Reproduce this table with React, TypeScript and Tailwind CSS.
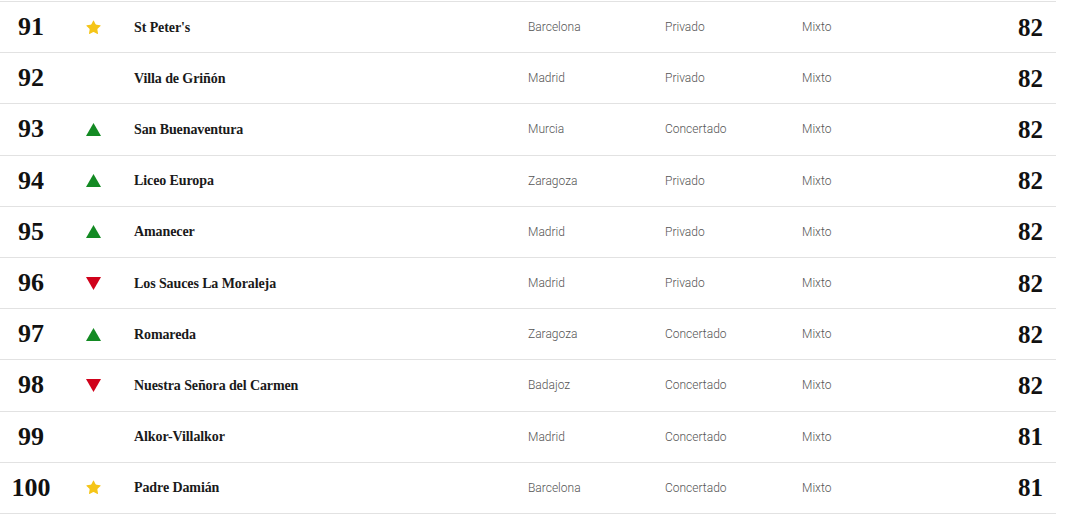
import { Star } from 'lucide-react';

type Trend = 'star' | 'up' | 'down' | null;

const rows: { pos: number; trend: Trend; name: string; city: string; kind: string; sex: string; score: number }[] = [
  { pos: 91, trend: 'star', name: "St Peter's", city: 'Barcelona', kind: 'Privado', sex: 'Mixto', score: 82 },
  { pos: 92, trend: null, name: 'Villa de Griñón', city: 'Madrid', kind: 'Privado', sex: 'Mixto', score: 82 },
  { pos: 93, trend: 'up', name: 'San Buenaventura', city: 'Murcia', kind: 'Concertado', sex: 'Mixto', score: 82 },
  { pos: 94, trend: 'up', name: 'Liceo Europa', city: 'Zaragoza', kind: 'Privado', sex: 'Mixto', score: 82 },
  { pos: 95, trend: 'up', name: 'Amanecer', city: 'Madrid', kind: 'Privado', sex: 'Mixto', score: 82 },
  { pos: 96, trend: 'down', name: 'Los Sauces La Moraleja', city: 'Madrid', kind: 'Privado', sex: 'Mixto', score: 82 },
  { pos: 97, trend: 'up', name: 'Romareda', city: 'Zaragoza', kind: 'Concertado', sex: 'Mixto', score: 82 },
  { pos: 98, trend: 'down', name: 'Nuestra Señora del Carmen', city: 'Badajoz', kind: 'Concertado', sex: 'Mixto', score: 82 },
  { pos: 99, trend: null, name: 'Alkor-Villalkor', city: 'Madrid', kind: 'Concertado', sex: 'Mixto', score: 81 },
  { pos: 100, trend: 'star', name: 'Padre Damián', city: 'Barcelona', kind: 'Concertado', sex: 'Mixto', score: 81 },
];

function TrendIcon({ trend }: { trend: Trend }) {
  if (trend === 'star') return <Star className="w-[17px] h-[17px] text-[#f5c518]" fill="#f5c518" strokeWidth={0} />;
  if (trend === 'up')
    return (
      <svg width="15" height="13" viewBox="0 0 15 13">
        <polygon points="7.5,0 15,13 0,13" fill="#138a23" />
      </svg>
    );
  if (trend === 'down')
    return (
      <svg width="15" height="13" viewBox="0 0 15 13">
        <polygon points="0,0 15,0 7.5,13" fill="#d0021b" />
      </svg>
    );
  return null;
}

export default function App() {
  return (
    <div className="bg-white w-[1080px] h-[515px] pt-px overflow-hidden">
      <div className="w-[1056px] border-t border-[#e2e2e2]">
        {rows.map((r) => (
          <div key={r.pos} className="flex items-center h-[51.2px] border-b border-[#e2e2e2]">
            <div className="w-[62px] text-center font-['Liberation_Serif',serif] font-bold text-[26px] text-[#111] leading-none">
              {r.pos}
            </div>
            <div className="w-[62px] flex justify-center">
              <TrendIcon trend={r.trend} />
            </div>
            <div className="w-[10px]" />
            <div className="w-[394px] font-['Liberation_Serif',serif] font-bold text-[14px] tracking-[-0.1px] text-[#1a1a1a]">
              {r.name}
            </div>
            <div className="w-[137px] font-['Roboto',sans-serif] font-light text-[12px] text-[#555]">{r.city}</div>
            <div className="w-[137px] font-['Roboto',sans-serif] font-light text-[12px] text-[#555]">{r.kind}</div>
            <div className="w-[100px] font-['Roboto',sans-serif] font-light text-[12px] text-[#555]">{r.sex}</div>
            <div className="flex-1 pr-[13px] text-right font-['Liberation_Serif',serif] font-bold text-[25px] text-[#111] leading-none">
              {r.score}
            </div>
          </div>
        ))}
      </div>
    </div>
  );
}
